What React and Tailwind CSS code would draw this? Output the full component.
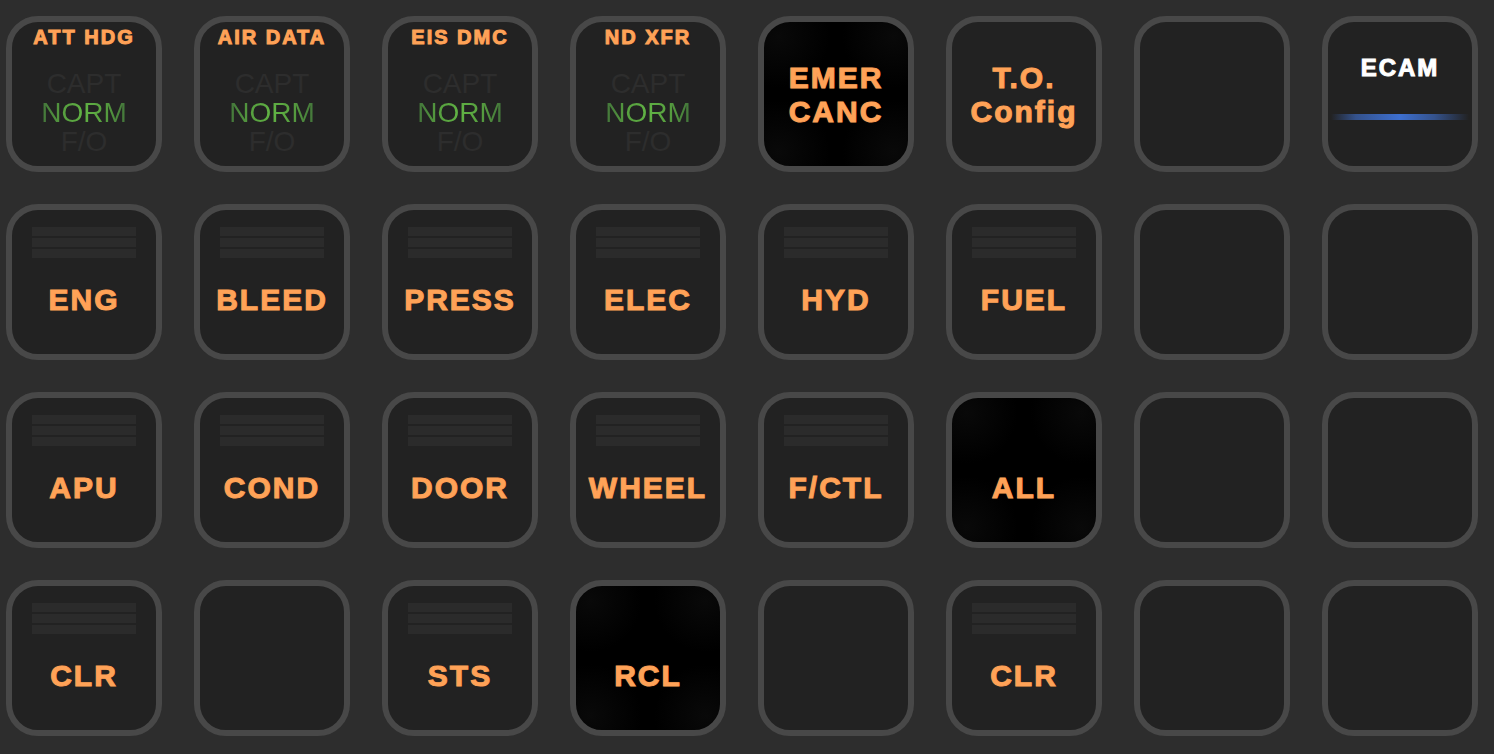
const KEYS = [
  { kind: 'selector', label: 'ATT HDG' },
  { kind: 'selector', label: 'AIR DATA' },
  { kind: 'selector', label: 'EIS DMC' },
  { kind: 'selector', label: 'ND XFR' },
  { kind: 'center', lines: ['EMER', 'CANC'], dark: true },
  { kind: 'center', lines: ['T.O.', 'Config'] },
  { kind: 'blank' },
  { kind: 'page', label: 'ECAM' },

  { kind: 'system', label: 'ENG' },
  { kind: 'system', label: 'BLEED' },
  { kind: 'system', label: 'PRESS' },
  { kind: 'system', label: 'ELEC' },
  { kind: 'system', label: 'HYD' },
  { kind: 'system', label: 'FUEL' },
  { kind: 'blank' },
  { kind: 'blank' },

  { kind: 'system', label: 'APU' },
  { kind: 'system', label: 'COND' },
  { kind: 'system', label: 'DOOR' },
  { kind: 'system', label: 'WHEEL' },
  { kind: 'system', label: 'F/CTL' },
  { kind: 'plain', label: 'ALL', dark: true },
  { kind: 'blank' },
  { kind: 'blank' },

  { kind: 'system', label: 'CLR' },
  { kind: 'blank' },
  { kind: 'system', label: 'STS' },
  { kind: 'plain', label: 'RCL', dark: true },
  { kind: 'blank' },
  { kind: 'system', label: 'CLR' },
  { kind: 'blank' },
  { kind: 'blank' },
];

const LABEL =
  'text-[30px] leading-[34px] font-bold tracking-[2px] text-[#ffa257] [-webkit-text-stroke:1px_#ffa257] [text-shadow:0_0_2px_#4a3422]';

function Selector({ label }) {
  return (
    <>
      <span className="mt-[3px] h-6 text-[20px] leading-6 font-bold tracking-[2px] text-[#ffa257] [-webkit-text-stroke:1px_#ffa257] [text-shadow:0_0_2px_#4a3422]">
        {label}
      </span>
      <span className="mt-5 flex flex-col items-center text-[28px] leading-[29px] text-[#2d2d2d]">
        <span>CAPT</span>
        <span className="bg-[radial-gradient(circle,#62b545_0%,#57a03f_45%,#41703a_100%)] bg-clip-text text-transparent">
          NORM
        </span>
        <span>F/O</span>
      </span>
    </>
  );
}

function System({ label, lights }) {
  return (
    <>
      <span className="mt-[17px] flex h-8 w-[104px] flex-col gap-[2px]">
        {lights &&
          [0, 1, 2].map((i) => (
            <span key={i} className="h-[9px] w-full bg-[#2b2b2b]" />
          ))}
      </span>
      <span className={`mt-6 ${LABEL}`}>{label}</span>
    </>
  );
}

function Center({ lines }) {
  return (
    <span className={`my-auto flex flex-col items-center pt-px ${LABEL}`}>
      {lines.map((line) => (
        <span key={line}>{line}</span>
      ))}
    </span>
  );
}

function Page({ label }) {
  return (
    <>
      <span className="mt-8 text-[24px] leading-7 font-bold tracking-[2px] text-white [-webkit-text-stroke:1px_#fff] [text-shadow:0_0_2px_#444]">
        {label}
      </span>
      <span className="mt-8 h-[6px] w-[138px] bg-[linear-gradient(to_right,transparent,#34528c_18%,#3d6fd0_50%,#34528c_75%,transparent)]" />
    </>
  );
}

function Key({ item }) {
  const face = item.dark
    ? 'bg-[#000] bg-[radial-gradient(circle_at_10%_10%,#090909,transparent_28%),radial-gradient(circle_at_90%_10%,#090909,transparent_28%),radial-gradient(circle_at_10%_90%,#090909,transparent_28%),radial-gradient(circle_at_90%_90%,#090909,transparent_28%)]'
    : 'bg-[#222222]';
  return (
    <button
      type="button"
      aria-label={item.kind === 'blank' ? 'Unassigned key' : undefined}
      className={`flex size-[156px] flex-col items-center justify-start rounded-[32px] border-[6px] border-[#484848] whitespace-nowrap ${face}`}
    >
      {item.kind === 'selector' && <Selector label={item.label} />}
      {item.kind === 'system' && <System label={item.label} lights />}
      {item.kind === 'plain' && <System label={item.label} />}
      {item.kind === 'center' && <Center lines={item.lines} />}
      {item.kind === 'page' && <Page label={item.label} />}
    </button>
  );
}

export default function App() {
  return (
    <main className="grid min-h-screen grid-cols-[repeat(auto-fill,156px)] content-start gap-8 bg-[#2d2d2d] py-4 pl-[6px] font-['Liberation_Sans',Arial,sans-serif]">
      {KEYS.map((item, i) => (
        <Key key={i} item={item} />
      ))}
    </main>
  );
}
